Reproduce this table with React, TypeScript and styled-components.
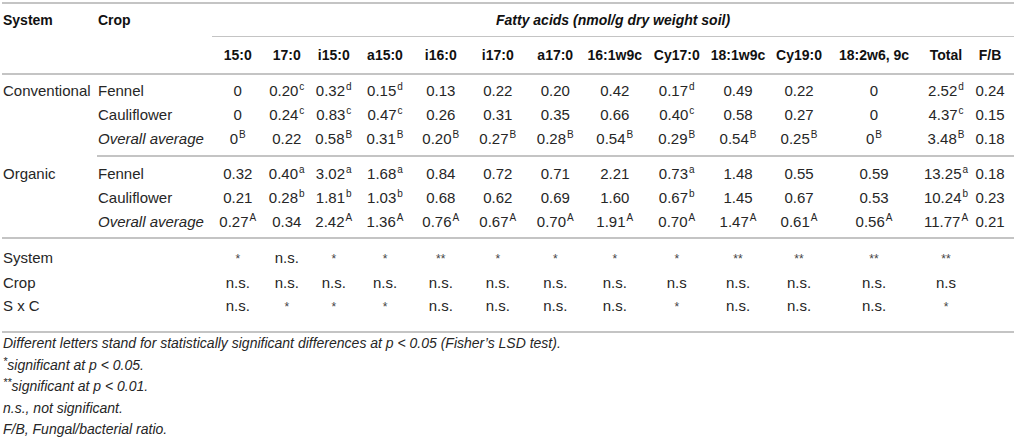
import styled, { createGlobalStyle } from "styled-components";

const GlobalStyle = createGlobalStyle`
  body {
    margin: 0;
    background: #ffffff;
  }
`;

const RULE = "#c4c4c4";

const colWidths = [95, 115, 51.5, 46.5, 47.5, 55, 56.5, 57.5, 57.5, 61.5, 62.5, 60, 62, 88, 56, 40];

const acids = [
  "15:0", "17:0", "i15:0", "a15:0", "i16:0", "i17:0", "a17:0",
  "16:1w9c", "Cy17:0", "18:1w9c", "Cy19:0", "18:2w6, 9c", "Total", "F/B",
];

type Group = {
  system: string;
  rows: { crop: string; avg?: boolean; values: string[] }[];
};

const groups: Group[] = [
  {
    system: "Conventional",
    rows: [
      { crop: "Fennel", values: ["0", "0.20^c", "0.32^d", "0.15^d", "0.13", "0.22", "0.20", "0.42", "0.17^d", "0.49", "0.22", "0", "2.52^d", "0.24"] },
      { crop: "Cauliflower", values: ["0", "0.24^c", "0.83^c", "0.47^c", "0.26", "0.31", "0.35", "0.66", "0.40^c", "0.58", "0.27", "0", "4.37^c", "0.15"] },
      { crop: "Overall average", avg: true, values: ["0^B", "0.22", "0.58^B", "0.31^B", "0.20^B", "0.27^B", "0.28^B", "0.54^B", "0.29^B", "0.54^B", "0.25^B", "0^B", "3.48^B", "0.18"] },
    ],
  },
  {
    system: "Organic",
    rows: [
      { crop: "Fennel", values: ["0.32", "0.40^a", "3.02^a", "1.68^a", "0.84", "0.72", "0.71", "2.21", "0.73^a", "1.48", "0.55", "0.59", "13.25^a", "0.18"] },
      { crop: "Cauliflower", values: ["0.21", "0.28^b", "1.81^b", "1.03^b", "0.68", "0.62", "0.69", "1.60", "0.67^b", "1.45", "0.67", "0.53", "10.24^b", "0.23"] },
      { crop: "Overall average", avg: true, values: ["0.27^A", "0.34", "2.42^A", "1.36^A", "0.76^A", "0.67^A", "0.70^A", "1.91^A", "0.70^A", "1.47^A", "0.61^A", "0.56^A", "11.77^A", "0.21"] },
    ],
  },
];

const stats: { label: string; values: string[] }[] = [
  { label: "System", values: ["*", "n.s.", "*", "*", "**", "*", "*", "*", "*", "**", "**", "**", "**", ""] },
  { label: "Crop", values: ["n.s.", "n.s.", "n.s.", "n.s.", "n.s.", "n.s.", "n.s.", "n.s.", "n.s", "n.s.", "n.s.", "n.s.", "n.s", ""] },
  { label: "S x C", values: ["n.s.", "*", "*", "*", "n.s.", "n.s.", "n.s.", "n.s.", "*", "n.s.", "n.s.", "n.s.", "*", ""] },
];

const Wrapper = styled.div`
  width: 1012px;
  padding: 2px 0 0 2px;
  font-family: "Liberation Sans", Arial, Helvetica, sans-serif;
  color: #262626;
`;

const Table = styled.table`
  width: 1012px;
  table-layout: fixed;
  border-collapse: separate;
  border-spacing: 0;
  border-top: 2px solid ${RULE};
`;

const Head = styled.th<{ $left?: boolean; $lh: number; $rule?: number; $italic?: boolean }>`
  padding: 0 ${(p) => (p.$left ? "0 0 1px" : "0")};
  font-size: 14px;
  font-weight: bold;
  font-style: ${(p) => (p.$italic ? "italic" : "normal")};
  color: #111;
  line-height: ${(p) => p.$lh}px;
  white-space: nowrap;
  text-align: ${(p) => (p.$left ? "left" : "center")};
  vertical-align: top;
  border-bottom: ${(p) => (p.$rule ? `${p.$rule}px solid ${RULE}` : "none")};
`;

const Cell = styled.td<{
  $left?: boolean;
  $italic?: boolean;
  $top?: number;
  $bottom?: number;
  $lh?: number;
  $rule?: boolean;
  $last?: boolean;
}>`
  padding: ${(p) => p.$top ?? 0}px ${(p) => (p.$last ? 8 : 0)}px ${(p) => p.$bottom ?? 0}px
    ${(p) => (p.$left ? 1 : 0)}px;
  font-size: 15px;
  font-style: ${(p) => (p.$italic ? "italic" : "normal")};
  line-height: ${(p) => p.$lh ?? 24}px;
  white-space: nowrap;
  text-align: ${(p) => (p.$left ? "left" : "center")};
  vertical-align: top;
  border-bottom: ${(p) => (p.$rule ? `2px solid ${RULE}` : "none")};
`;

const Sup = styled.sup`
  position: relative;
  top: -6px;
  margin-left: 1px;
  font-size: 10px;
  line-height: 0;
  vertical-align: baseline;
`;

const Star = styled.span`
  font-size: 12px;
  color: #444;
`;

const Notes = styled.div`
  padding-left: 1px;
  font-size: 14px;
  font-style: italic;
  line-height: 21.5px;
  color: #262626;
`;

const NoteSup = styled.sup`
  position: relative;
  top: -5px;
  font-size: 11px;
  line-height: 0;
  vertical-align: baseline;
`;

const Value = ({ text }: { text: string }) => {
  const [num, sup] = text.split("^");
  return (
    <>
      {num}
      {sup && <Sup>{sup}</Sup>}
    </>
  );
};

const StatValue = ({ text }: { text: string }) =>
  text.startsWith("*") ? <Star>{text}</Star> : <>{text}</>;

export default function App() {
  return (
    <Wrapper>
      <GlobalStyle />
      <Table>
        <colgroup>
          {colWidths.map((w, i) => (
            <col key={i} style={{ width: w }} />
          ))}
        </colgroup>
        <thead>
          <tr>
            <Head $left $lh={32} rowSpan={2} $rule={2}>
              System
            </Head>
            <Head $left $lh={32} rowSpan={2} $rule={2}>
              Crop
            </Head>
            <Head colSpan={14} $lh={32} $rule={1} $italic>
              Fatty acids (nmol/g dry weight soil)
            </Head>
          </tr>
          <tr>
            {acids.map((a, i) => (
              <Head key={a} $lh={36} $rule={2} style={i === 13 ? { paddingRight: 8 } : undefined}>
                {a}
              </Head>
            ))}
          </tr>
        </thead>
        <tbody>
          {groups.map((g, gi) =>
            g.rows.map((r, ri) => {
              const first = ri === 0;
              const last = ri === g.rows.length - 1;
              const top = first ? (gi === 0 ? 4 : 5) : 0;
              const bottom = last ? (gi === 0 ? 4 : 3) : 0;
              return (
                <tr key={`${gi}-${ri}`}>
                  {first && (
                    <Cell $left rowSpan={3} $top={top} $rule={gi === 1}>
                      {g.system}
                    </Cell>
                  )}
                  <Cell $left $italic={r.avg} $top={top} $bottom={bottom} $rule={last}>
                    {r.crop}
                  </Cell>
                  {r.values.map((v, vi) => (
                    <Cell key={vi} $top={top} $bottom={bottom} $rule={last} $last={vi === 13}>
                      <Value text={v} />
                    </Cell>
                  ))}
                </tr>
              );
            })
          )}
          {stats.map((s, si) => {
            const top = si === 0 ? 7 : 0;
            const bottom = si === stats.length - 1 ? 12 : 0;
            const rule = si === stats.length - 1;
            return (
              <tr key={s.label}>
                <Cell $left colSpan={2} $lh={23} $top={top} $bottom={bottom} $rule={rule}>
                  {s.label}
                </Cell>
                {s.values.map((v, vi) => (
                  <Cell key={vi} $lh={23} $top={top} $bottom={bottom} $rule={rule} $last={vi === 13}>
                    <StatValue text={v} />
                  </Cell>
                ))}
              </tr>
            );
          })}
        </tbody>
      </Table>
      <Notes>
        <div>Different letters stand for statistically significant differences at p &lt; 0.05 (Fisher’s LSD test).</div>
        <div>
          <NoteSup>*</NoteSup>significant at p &lt; 0.05.
        </div>
        <div>
          <NoteSup>**</NoteSup>significant at p &lt; 0.01.
        </div>
        <div>n.s., not significant.</div>
        <div>F/B, Fungal/bacterial ratio.</div>
      </Notes>
    </Wrapper>
  );
}
